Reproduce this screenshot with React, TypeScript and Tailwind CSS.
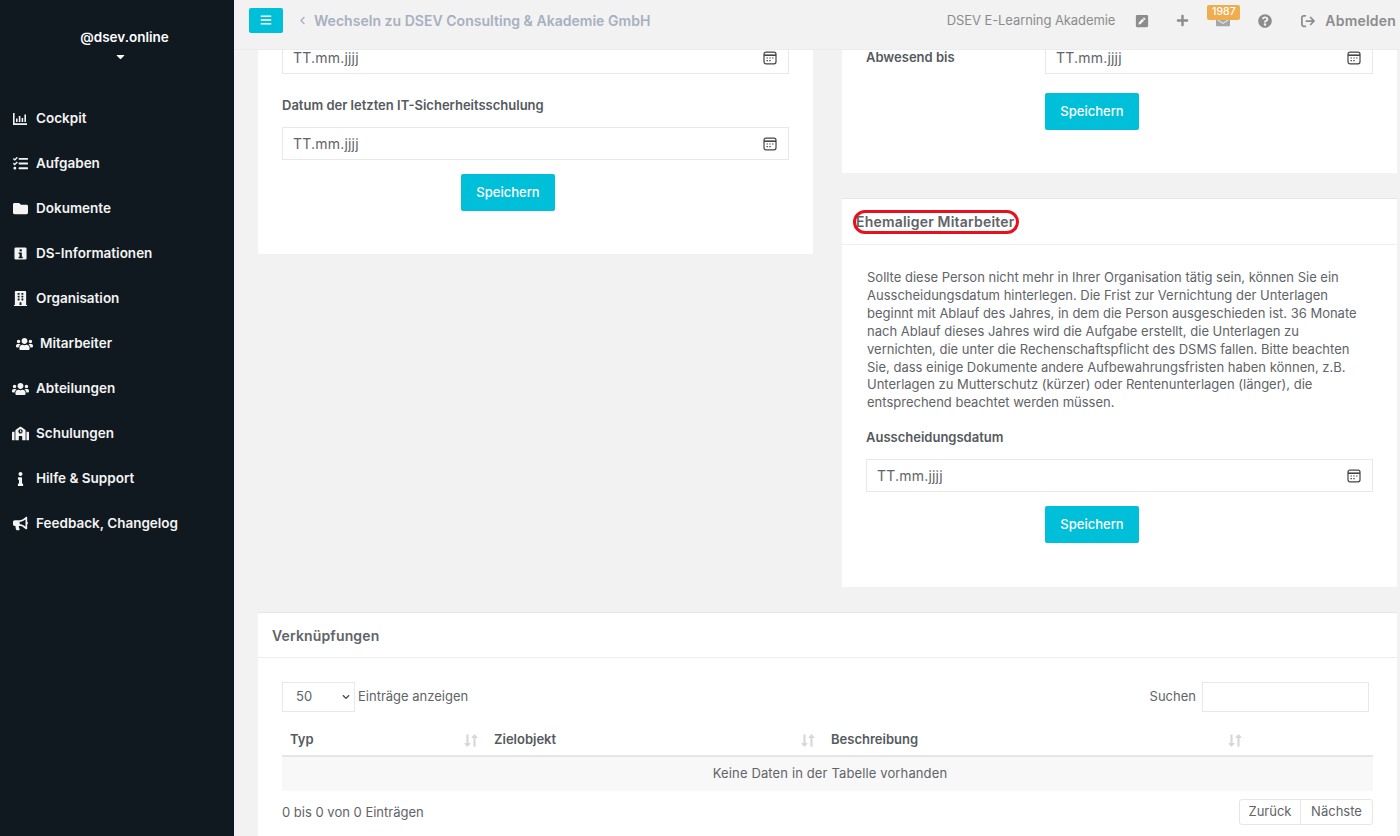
import React from "react";
import { FaBars, FaChevronLeft, FaPlus, FaEnvelope, FaQuestionCircle, FaTasks, FaFolder, FaBuilding, FaUsers, FaSchool, FaInfo, FaBullhorn, FaPenSquare, FaCaretDown, FaChevronDown, FaLongArrowAltDown, FaLongArrowAltUp } from "react-icons/fa";
import { FaArrowRightFromBracket } from "react-icons/fa6";

const InfoSquare = () => (
  <svg viewBox="0 0 14 14" className="w-[13px] h-[13px] shrink-0"><rect x="0.5" y="0.5" width="13" height="13" rx="1.5" fill="currentColor" /><rect x="6" y="2.5" width="2.4" height="2.2" fill="#101820" /><path d="M5 6h3.4v4.4h1V12H5v-1.6h1V7.6H5z" fill="#101820" /></svg>
);
const ChartSquare = () => (
  <svg viewBox="0 0 14 12" className="w-[14px] h-[12px] shrink-0"><path d="M0 0h1.6v10.2H14V12H0z" fill="currentColor" /><rect x="3" y="5.5" width="1.6" height="3.5" fill="currentColor" /><rect x="5.8" y="3" width="1.6" height="6" fill="currentColor" /><rect x="8.6" y="5" width="1.6" height="4" fill="currentColor" /><rect x="11.4" y="1.5" width="1.6" height="7.5" fill="currentColor" /></svg>
);
const Calendar = () => (
  <svg viewBox="0 0 14 14" className="w-[14px] h-[14px] text-[#444]" fill="none" stroke="currentColor"><rect x="1" y="1.2" width="12" height="11.6" rx="2" strokeWidth="1.2" /><path d="M1 4.2h12" strokeWidth="1.6" /><path d="M3.5 7h1.4M6.3 7h1.4M9.1 7h1.4M3.5 9.6h1.4M6.3 9.6h1.4" strokeWidth="1.2" /></svg>
);
const Sort = () => (
  <span className="flex items-center text-[#d8d8d8]"><FaLongArrowAltDown className="w-[7px] h-[15px]" /><FaLongArrowAltUp className="w-[7px] h-[15px]" /></span>
);

const nav: [React.ReactNode, string, string][] = [
  [<ChartSquare />, "Cockpit", ""],
  [<FaTasks className="w-[15px] h-[15px] shrink-0" />, "Aufgaben", ""],
  [<FaFolder className="w-[15px] h-[15px] shrink-0" />, "Dokumente", ""],
  [<InfoSquare />, "DS-Informationen", ""],
  [<FaBuilding className="w-[15px] h-[15px] shrink-0" />, "Organisation", ""],
  [<FaUsers className="w-[17px] h-[16px] shrink-0" />, "Mitarbeiter", "ml-[4px]"],
  [<FaUsers className="w-[17px] h-[16px] shrink-0" />, "Abteilungen", ""],
  [<FaSchool className="w-[17px] h-[15px] shrink-0" />, "Schulungen", ""],
  [<FaInfo className="w-[13px] h-[14px] shrink-0" />, "Hilfe & Support", ""],
  [<FaBullhorn className="w-[15px] h-[15px] shrink-0" />, "Feedback, Changelog", ""],
];

const para = [
  "Sollte diese Person nicht mehr in Ihrer Organisation tätig sein, können Sie ein",
  "Ausscheidungsdatum hinterlegen. Die Frist zur Vernichtung der Unterlagen",
  "beginnt mit Ablauf des Jahres, in dem die Person ausgeschieden ist. 36 Monate",
  "nach Ablauf dieses Jahres wird die Aufgabe erstellt, die Unterlagen zu",
  "vernichten, die unter die Rechenschaftspflicht des DSMS fallen. Bitte beachten",
  "Sie, dass einige Dokumente andere Aufbewahrungsfristen haben können, z.B.",
  "Unterlagen zu Mutterschutz (kürzer) oder Rentenunterlagen (länger), die",
  "entsprechend beachtet werden müssen.",
];

const DateInput = ({ className = "" }: { className?: string }) => (
  <div className={`h-[33px] border border-[#e8e8e8] bg-white flex items-center justify-between pl-[10px] pr-[11px] text-[14px] tracking-[0.2px] text-[#606468] ${className}`}>
    <span>TT.mm.jjjj</span>
    <Calendar />
  </div>
);
const SaveBtn = ({ className = "" }: { className?: string }) => (
  <button className={`w-[94px] h-[37px] rounded-[2px] bg-[#00c0d9] text-white text-[13px] font-medium flex items-center justify-center ${className}`}>Speichern</button>
);

export default function App() {
  return (
    <div className="flex h-[836px] w-[1400px] overflow-hidden bg-[#f2f2f2] text-[#606468] font-['Inter','Open_Sans',sans-serif]">
      <aside className="w-[234px] shrink-0 bg-[#101820] text-white flex flex-col">
        <div className="h-[96px] pt-[29px] flex flex-col items-center pl-[15px] text-[13.5px] font-semibold">
          <span className="leading-[17px]">@dsev.online</span>
          <FaCaretDown className="mt-[4px] -ml-[8px] text-[13px]" />
        </div>
        <nav className="flex flex-col">
          {nav.map(([icon, label, extra]) => (
            <div key={label} className={`h-[45px] pl-[13px] flex items-center gap-[9px] text-[13.5px] font-semibold text-[#f4f4f4] ${extra}`}>
              <span className="w-[14px] flex items-center justify-center">{icon}</span>
              <span className="whitespace-nowrap">{label}</span>
            </div>
          ))}
        </nav>
      </aside>

      <div className="flex-1 flex flex-col min-w-0">
        <header className="h-[50px] shrink-0 z-10 bg-[#f2f2f2] flex items-center pl-[15px] pr-[4px] relative border-b border-[#ececec]">
          <button className="w-[34px] h-[25px] mb-[8px] mt-[-1px] rounded-[2px] bg-[#00c0d9] text-white flex items-center justify-center text-[12px]"><FaBars /></button>
          <FaChevronLeft className="ml-[15px] mb-[8px] text-[#a7b0c0] text-[9px]" />
          <span className="ml-[7px] mb-[9px] text-[14px] font-semibold text-[#a7b0c0] tracking-[0.03px]">Wechseln zu DSEV Consulting &amp; Akademie GmbH</span>
          <div className="ml-auto mb-[8px] flex items-center text-[#8c8c8c]">
            <span className="text-[13px] tracking-[-0.08px]">DSEV E-Learning Akademie</span>
            <FaPenSquare className="ml-[20px] text-[14px]" />
            <FaPlus className="ml-[27px] text-[13px]" />
            <span className="relative ml-[27px]">
              <FaEnvelope className="text-[14px] text-[#a6a6a6]" />
              <span className="absolute -top-[9px] -left-[9px] w-[33px] h-[15px] rounded-[2px] bg-[#f0ad4e] text-white text-[10.5px] font-medium flex items-center justify-center">1987</span>
            </span>
            <FaQuestionCircle className="ml-[28px] text-[14px]" />
            <FaArrowRightFromBracket className="ml-[29px] text-[14px]" />
            <span className="ml-[10px] text-[14px] font-semibold tracking-[0.2px]">Abmelden</span>
          </div>
        </header>

        <main className="flex-1 overflow-hidden pl-[24px] pr-[3px]">
          <div className="-mt-[9px] grid grid-cols-[555px_555px] gap-x-[29px] items-start">
            <section className="bg-white h-[213px] pl-[24px] pr-[24px]">
              <DateInput />
              <div className="mt-[22px] text-[13px] font-semibold leading-[18px] text-[#555a5e]">Datum der letzten IT-Sicherheitsschulung</div>
              <DateInput className="mt-[13px]" />
              <SaveBtn className="mt-[14px] ml-[179px]" />
            </section>

            <div className="flex flex-col gap-[25px]">
              <section className="bg-white h-[132px] pl-[24px] pr-[24px]">
                <div className="flex">
                  <span className="w-[179px] pt-[7px] text-[13px] font-semibold leading-[18px] text-[#555a5e]">Abwesend bis</span>
                  <DateInput className="flex-1" />
                </div>
                <SaveBtn className="mt-[19px] ml-[179px]" />
              </section>

              <section className="bg-white h-[389px] border-t border-[#e6e6e6]">
                <div className="relative h-[46px] border-b border-[#eeeeee] pl-[14px] flex items-center text-[14px] font-semibold tracking-[0.2px] text-[#606468]">
                  Ehemaliger Mitarbeiter
                  <span className="absolute left-[11px] top-[11px] w-[166px] h-[24px] border-[3px] border-[#e8101c] rounded-[12px/12px]"></span>
                </div>
                <div className="pl-[25px] pr-[24px] pt-[24px]">
                  <p className="text-[13px] leading-[17.9px] text-[#606468] whitespace-nowrap">
                    {para.map((l) => (<span key={l} className="block">{l}</span>))}
                  </p>
                  <div className="ml-[-1px] mt-[16px] text-[13px] font-semibold leading-[18px] text-[#555a5e]">Ausscheidungsdatum</div>
                  <DateInput className="mt-[13px] -ml-[1px]" />
                  <SaveBtn className="mt-[14px] ml-[178px]" />
                </div>
              </section>
            </div>

            <section className="col-span-2 mt-[25px] bg-white h-[300px] border-t border-[#e6e6e6]">
              <div className="h-[45px] border-b border-[#eeeeee] pl-[14px] flex items-center text-[14px] font-semibold tracking-[0.15px] text-[#606468]">Verknüpfungen</div>
              <div className="pl-[24px] pr-[24px] pt-[24px]">
                <div className="flex items-center h-[30px] text-[13px]">
                  <div className="w-[73px] h-[30px] border border-[#e8e8e8] flex items-center justify-between pl-[13px] pr-[4px]">
                    <span>50</span>
                    <FaChevronDown className="text-[8px] text-[#444]" />
                  </div>
                  <span className="ml-[3px]">Einträge anzeigen</span>
                  <span className="ml-auto">Suchen</span>
                  <div className="ml-[6px] mr-[4px] w-[167px] h-[30px] border border-[#e8e8e8]"></div>
                </div>
                <div className="mt-[13px] grid grid-cols-[204px_337px_422px_128px] h-[32px] border-b-2 border-[#e6e6e6] text-[13px] font-semibold text-[#555a5e]">
                  <div className="pl-[8px] pr-[8px] flex items-center justify-between"><span>Typ</span><Sort /></div>
                  <div className="pl-[8px] pr-[8px] flex items-center justify-between"><span>Zielobjekt</span><Sort /></div>
                  <div className="pl-[8px] pr-[3px] flex items-center justify-between"><span>Beschreibung</span><Sort /></div>
                </div>
                <div className="h-[34px] bg-[#f8f8f8] flex items-center justify-center text-[13px] tracking-[0.13px] pl-[5px]">Keine Daten in der Tabelle vorhanden</div>
                <div className="mt-[8px] flex items-center justify-between text-[13px]">
                  <span className="mt-[2px]">0 bis 0 von 0 Einträgen</span>
                  <div className="flex h-[26px] border border-[#e6e6e6] rounded-[3px]">
                    <span className="w-[61px] flex items-center justify-center border-r border-[#e6e6e6]">Zurück</span>
                    <span className="w-[71px] flex items-center justify-center">Nächste</span>
                  </div>
                </div>
              </div>
            </section>
          </div>
        </main>
      </div>
    </div>
  );
}
